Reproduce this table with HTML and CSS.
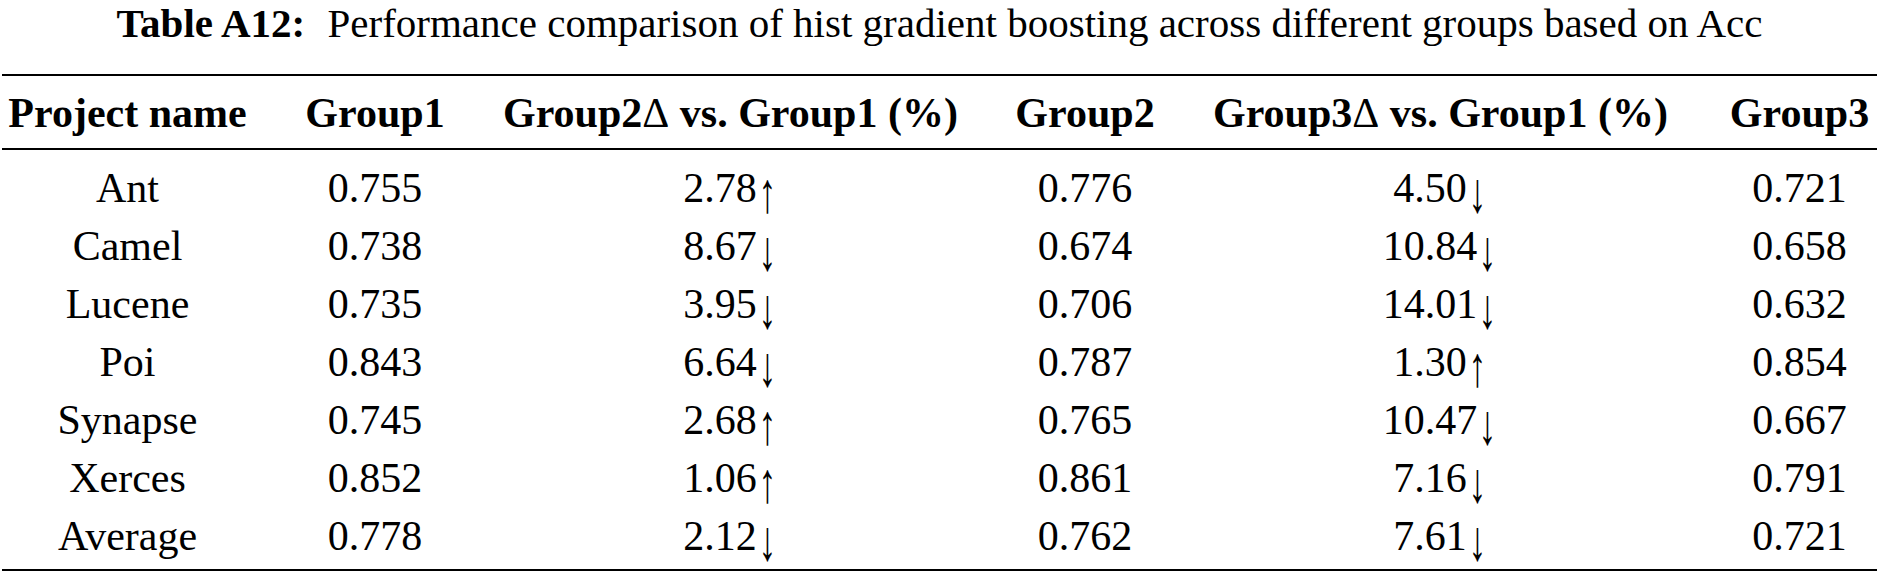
FILE: index.html
```html
<!DOCTYPE html>
<html lang="en">
<head>
<meta charset="utf-8">
<title>Table A12</title>
<link rel="stylesheet" href="styles.css">
</head>
<body>
<div class="title"><span class="label">Table A12:</span> Performance comparison of hist gradient boosting across different groups based on Acc</div>
<table class="results">
  <colgroup>
    <col class="c1"><col class="c2"><col class="c3"><col class="c4"><col class="c5"><col class="c6">
  </colgroup>
  <thead>
    <tr>
      <th class="first">Project name</th>
      <th>Group1</th>
      <th>Group2<span class="delta">Δ</span> vs. Group1 (%)</th>
      <th>Group2</th>
      <th>Group3<span class="delta">Δ</span> vs. Group1 (%)</th>
      <th class="last">Group3</th>
    </tr>
  </thead>
  <tbody>
    <tr><td class="first">Ant</td><td>0.755</td><td>2.78<span class="arrow">↑</span></td><td>0.776</td><td>4.50<span class="arrow">↓</span></td><td class="last">0.721</td></tr>
    <tr><td class="first">Camel</td><td>0.738</td><td>8.67<span class="arrow">↓</span></td><td>0.674</td><td>10.84<span class="arrow">↓</span></td><td class="last">0.658</td></tr>
    <tr><td class="first">Lucene</td><td>0.735</td><td>3.95<span class="arrow">↓</span></td><td>0.706</td><td>14.01<span class="arrow">↓</span></td><td class="last">0.632</td></tr>
    <tr><td class="first">Poi</td><td>0.843</td><td>6.64<span class="arrow">↓</span></td><td>0.787</td><td>1.30<span class="arrow">↑</span></td><td class="last">0.854</td></tr>
    <tr><td class="first">Synapse</td><td>0.745</td><td>2.68<span class="arrow">↑</span></td><td>0.765</td><td>10.47<span class="arrow">↓</span></td><td class="last">0.667</td></tr>
    <tr><td class="first">Xerces</td><td>0.852</td><td>1.06<span class="arrow">↑</span></td><td>0.861</td><td>7.16<span class="arrow">↓</span></td><td class="last">0.791</td></tr>
    <tr><td class="first">Average</td><td>0.778</td><td>2.12<span class="arrow">↓</span></td><td>0.762</td><td>7.61<span class="arrow">↓</span></td><td class="last">0.721</td></tr>
  </tbody>
</table>
</body>
</html>
```
FILE: styles.css
```css
body {
  margin: 0;
  background: #ffffff;
  color: #000000;
  font-family: "Liberation Serif", Tinos, "Times New Roman", Times, serif;
}

.title {
  font-size: 41px;
  line-height: 46px;
  text-align: center;
  white-space: nowrap;
  margin: 0 0 28px;
}

.title .label {
  font-weight: 700;
  margin-right: 12px;
}

.results {
  margin-left: 2px;
  width: 1875px;
  table-layout: fixed;
  border-collapse: separate;
  border-spacing: 0;
  font-size: 42px;
}

.c1 { width: 276px; }
.c2 { width: 194px; }
.c3 { width: 517px; }
.c4 { width: 192px; }
.c5 { width: 519px; }
.c6 { width: 177px; }

.results th {
  font-weight: 700;
  line-height: 46px;
  padding: 14px 0 12px;
  text-align: center;
  white-space: nowrap;
  border-top: 2px solid #000;
  border-bottom: 2px solid #000;
}

.results th .delta {
  font-weight: 400;
}

.results td {
  line-height: 58px;
  padding: 0;
  text-align: center;
  white-space: nowrap;
}

.results .arrow {
  display: inline-block;
  line-height: 42px;
  transform: translateY(5px) scale(0.85, 1.36);
}

.results .first { padding-right: 25px; }
.results .last { padding-left: 22px; }

.results tbody tr:first-child td { padding-top: 9px; }

.results tbody tr:last-child td {
  padding-bottom: 4px;
  border-bottom: 2px solid #000;
}
```
